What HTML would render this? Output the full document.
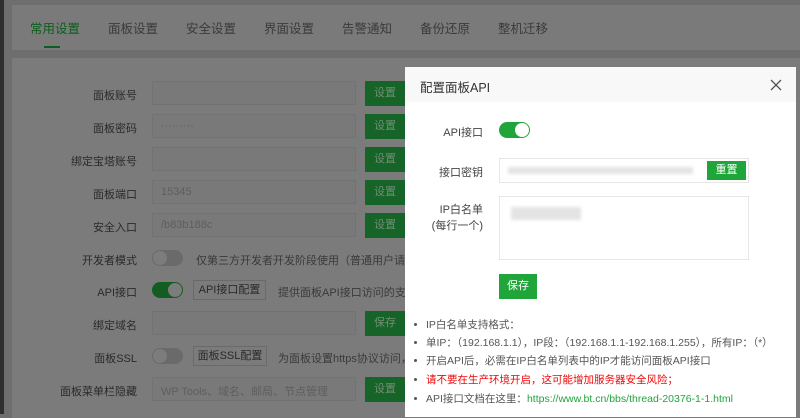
<!DOCTYPE html>
<html><head><meta charset="utf-8"><style>
*{margin:0;padding:0;box-sizing:border-box}
body{width:800px;height:414px;overflow:hidden;background:#6e6e6e;font-family:"Liberation Sans","Noto Sans CJK SC",sans-serif;font-size:11px;position:relative}
.abs{position:absolute}
.strip{left:0;top:0;width:4px;height:414px;background:#2e2f31}
.tabs{left:12px;top:5px;width:800px;height:45px;background:#7a7a7a}
.tab{top:18px;font-size:12.5px;color:#3a3a3a}
.main{left:12px;top:58px;width:800px;height:360px;background:#7b7b7b}
.lbl{width:125px;text-align:right;left:12px;color:#2a2a2a}
.inp{left:152px;width:204px;height:24px;background:#797979;border:1px solid #727272;color:#5e5e5e;padding:5px 8px}
.btn{left:365px;width:40px;height:25px;background:#166428;color:#6f8f74;text-align:center;line-height:25px}
.tg{width:31px;height:16px;border-radius:8px;left:152px}
.modal{left:405px;top:67px;width:391px;height:350px;background:#fff}
.mh{left:0;top:0;width:391px;height:35px;background:#f8f8f8;color:#333;font-size:12.5px;padding:10px 0 0 15px}
.li{left:21px;color:#555;font-size:10.5px}
.li:before{content:"";position:absolute;left:-12px;top:6px;width:3px;height:3px;border-radius:2px;background:#555}
.blur{background:#e4e4e4;filter:blur(1.5px)}
</style></head><body>
<div class="abs strip"></div>
<div class="abs tabs"></div>
<div class="abs tab" style="left:30px;color:#0d5d1e">常用设置</div>
<div class="abs" style="left:44px;top:46px;width:16px;height:2px;background:#0d5d1e"></div>
<div class="abs tab" style="left:108px">面板设置</div>
<div class="abs tab" style="left:186px">安全设置</div>
<div class="abs tab" style="left:264px">界面设置</div>
<div class="abs tab" style="left:342px">告警通知</div>
<div class="abs tab" style="left:420px">备份还原</div>
<div class="abs tab" style="left:498px">整机迁移</div>
<div class="abs main"></div>

<div class="abs lbl" style="top:87px">面板账号</div><div class="abs inp" style="top:81px"></div><div class="abs btn" style="top:81px">设置</div>
<div class="abs lbl" style="top:120px">面板密码</div><div class="abs inp" style="top:114px">·········</div><div class="abs btn" style="top:114px">设置</div>
<div class="abs lbl" style="top:153px">绑定宝塔账号</div><div class="abs inp" style="top:147px"></div><div class="abs btn" style="top:147px">设置</div>
<div class="abs lbl" style="top:186px">面板端口</div><div class="abs inp" style="top:180px">15345</div><div class="abs btn" style="top:180px">设置</div>
<div class="abs lbl" style="top:219px">安全入口</div><div class="abs inp" style="top:213px">/b83b188c</div><div class="abs btn" style="top:213px">设置</div>
<div class="abs lbl" style="top:252px">开发者模式</div><div class="abs tg" style="top:250px;background:#6a6a6a"><div class="abs" style="left:1px;top:1px;width:14px;height:14px;border-radius:7px;background:#7c7c7c"></div></div>
<div class="abs" style="left:196px;top:252px;color:#3a3a3a">仅第三方开发者开发阶段使用（普通用户请勿开启）</div>
<div class="abs lbl" style="top:284px">API接口</div><div class="abs tg" style="top:282px;background:#145d22"><div class="abs" style="left:16px;top:1px;width:14px;height:14px;border-radius:7px;background:#7c7c7c"></div></div>
<div class="abs" style="left:193px;top:280px;width:73px;height:20px;border:1px solid #6a6a6a;color:#2a2a2a;text-align:center;line-height:18px">API接口配置</div>
<div class="abs" style="left:278px;top:284px;color:#3a3a3a">提供面板API接口访问的支持（</div>
<div class="abs lbl" style="top:317px">绑定域名</div><div class="abs inp" style="top:311px"></div><div class="abs btn" style="top:311px">保存</div>
<div class="abs lbl" style="top:350px">面板SSL</div><div class="abs tg" style="top:348px;background:#6a6a6a"><div class="abs" style="left:1px;top:1px;width:14px;height:14px;border-radius:7px;background:#7c7c7c"></div></div>
<div class="abs" style="left:193px;top:346px;width:74px;height:20px;border:1px solid #6a6a6a;color:#2a2a2a;text-align:center;line-height:18px">面板SSL配置</div>
<div class="abs" style="left:278px;top:350px;color:#3a3a3a">为面板设置https协议访问，提</div>
<div class="abs lbl" style="top:383px">面板菜单栏隐藏</div><div class="abs inp" style="top:377px">WP Tools、域名、邮局、节点管理</div><div class="abs btn" style="top:377px">设置</div>

<div class="abs modal">
 <div class="abs mh">配置面板API</div>
 <svg class="abs" style="left:365px;top:12px" width="12" height="12"><path d="M1 1L11 11M11 1L1 11" stroke="#555" stroke-width="1.3"/></svg>
 <div class="abs" style="left:0;width:78px;text-align:right;top:57px;color:#444">API接口</div>
 <div class="abs" style="left:94px;top:55px;width:31px;height:16px;border-radius:8px;background:#20a53a"><div class="abs" style="left:16px;top:1px;width:14px;height:14px;border-radius:7px;background:#fff"></div></div>
 <div class="abs" style="left:0;width:78px;text-align:right;top:97px;color:#444">接口密钥</div>
 <div class="abs" style="left:94px;top:91px;width:250px;height:25px;border:1px solid #e6e6e6"></div>
 <div class="abs blur" style="left:103px;top:100px;width:185px;height:7px"></div>
 <div class="abs" style="left:302px;top:94px;width:39px;height:19px;background:#20a53a;color:#fff;text-align:center;line-height:19px">重置</div>
 <div class="abs" style="left:0;width:78px;text-align:right;top:135px;color:#444;line-height:16px">IP白名单<br>(每行一个)</div>
 <div class="abs" style="left:94px;top:129px;width:250px;height:64px;border:1px solid #e6e6e6"></div>
 <div class="abs blur" style="left:106px;top:140px;width:70px;height:13px"></div>
 <div class="abs" style="left:94px;top:207px;width:38px;height:25px;background:#20a53a;color:#fff;text-align:center;line-height:25px">保存</div>
 <div class="abs li" style="top:250px">IP白名单支持格式：</div>
 <div class="abs li" style="top:268px">单IP：（192.168.1.1），IP段：（192.168.1.1-192.168.1.255），所有IP：（*）</div>
 <div class="abs li" style="top:286px">开启API后，必需在IP白名单列表中的IP才能访问面板API接口</div>
 <div class="abs li" style="top:305px;color:#ef0808">请不要在生产环境开启，这可能增加服务器安全风险；</div>
 <div class="abs li" style="top:324px">API接口文档在这里：<span style="color:#20a53a">https://www.bt.cn/bbs/thread-20376-1-1.html</span></div>
</div>
</body></html>
